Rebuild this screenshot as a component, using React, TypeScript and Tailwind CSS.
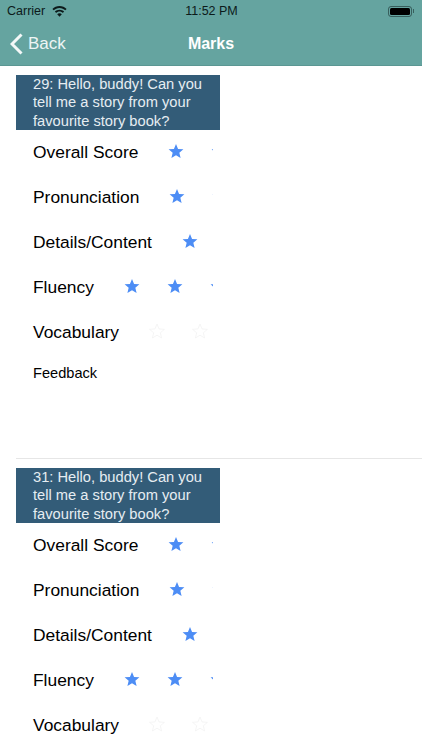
const font = { fontFamily: "'Liberation Sans', Arial, sans-serif" };

function Star({ on }: { on: boolean }) {
  return (
    <span className="flex w-[43px] shrink-0 justify-center">
      <svg width="16" height="16" viewBox="0 0 24 24">
        <path
          d="M12 1.500l3.100 7.400 8 .6-6.100 5.200 1.900 7.800L12 18.300 5.100 22.500l1.900-7.800L.9 9.500l8-.6z"
          fill={on ? "#4d8df5" : "none"}
          stroke={on ? "none" : "#f3f3f3"}
          strokeWidth="1.300"
        />
      </svg>
    </span>
  );
}

function Row({ label, stars }: { label: string; stars: boolean[] }) {
  return (
    <div className="flex h-[45px] w-[197px] items-center overflow-hidden pl-[17px]">
      <span className="shrink-0 whitespace-nowrap pb-[2px] text-[17.400px] leading-[22px] text-black">{label}</span>
      <span className="flex shrink-0 pb-[4px] pl-[16.500px]">
        {stars.map((s, i) => (
          <Star key={i} on={s} />
        ))}
      </span>
    </div>
  );
}

function Card({ n }: { n: number }) {
  return (
    <section className="ml-4 h-[393px] border-b border-[#e6e6e6] pt-[9px]">
      <div className="h-[55px] w-[204px] overflow-hidden bg-[#335c78] pl-[17px] text-[14.700px] leading-[18.300px] text-[#e6edf2]">
        {n}: Hello, buddy! Can you tell me a story from your favourite story book?
      </div>
      <div>
        <Row label="Overall Score" stars={[true, true, true]} />
        <Row label="Pronunciation" stars={[true, true, true]} />
        <Row label="Details/Content" stars={[true, true]} />
        <Row label="Fluency" stars={[true, true, true]} />
        <Row label="Vocabulary" stars={[false, false, false]} />
      </div>
      <div className="pl-[17px] pt-[9px] text-[14.600px] leading-[18px] text-black">Feedback</div>
    </section>
  );
}

export default function App() {
  return (
    <div className="h-[750px] w-[422px] overflow-hidden bg-white" style={font}>
      <header className="h-[66px] border-b border-[#5b9793] bg-[#65a4a0]">
        <div className="relative flex h-[22px] items-center px-[7px] text-[12.500px] text-[#0c1a1a]">
          <span>Carrier</span>
          <svg className="ml-[7px]" width="15" height="11" viewBox="0 0 15 11" fill="#0c1a1a">
            <path d="M7.500 0C4.700 0 2.200 1.100.4 2.900l1.300 1.400C3.200 2.800 5.200 1.900 7.500 1.900s4.300.9 5.800 2.400l1.300-1.400C12.800 1.100 10.300 0 7.500 0z" />
            <path d="M7.500 3.700c-1.800 0-3.400.7-4.600 1.900l1.300 1.400c.9-.8 2-1.400 3.300-1.400s2.400.6 3.300 1.400l1.300-1.400c-1.200-1.200-2.800-1.900-4.600-1.900z" />
            <path d="M7.500 7.300c-.9 0-1.700.4-2.300 1l2.300 2.500 2.300-2.500c-.6-.6-1.400-1-2.300-1z" />
          </svg>
          <span className="absolute left-[1px] right-0 text-center font-medium">11:52 PM</span>
          <span className="ml-auto mr-[1px] flex items-center">
            <span className="flex h-[11px] w-[24px] items-center rounded-[3px] border border-[#0c1a1a]/50 p-[1px]">
              <span className="h-full w-full rounded-[1.500px] bg-black" />
            </span>
            <span className="ml-[1px] h-[4px] w-[1px] bg-[#0c1a1a]/50" />
          </span>
        </div>
        <div className="relative flex h-[43px] items-center text-white">
          <svg className="ml-[10px]" width="13" height="22" viewBox="0 0 13 22" fill="none" stroke="#f4f8f8" strokeWidth="3">
            <path d="M11.500 1.500L2 11l9.500 9.500" />
          </svg>
          <span className="ml-[5px] text-[17px] text-[#eef5f4]">Back</span>
          <span className="absolute left-0 right-0 text-center text-[16px] font-bold">Marks</span>
        </div>
      </header>
      <Card n={29} />
      <Card n={31} />
    </div>
  );
}
